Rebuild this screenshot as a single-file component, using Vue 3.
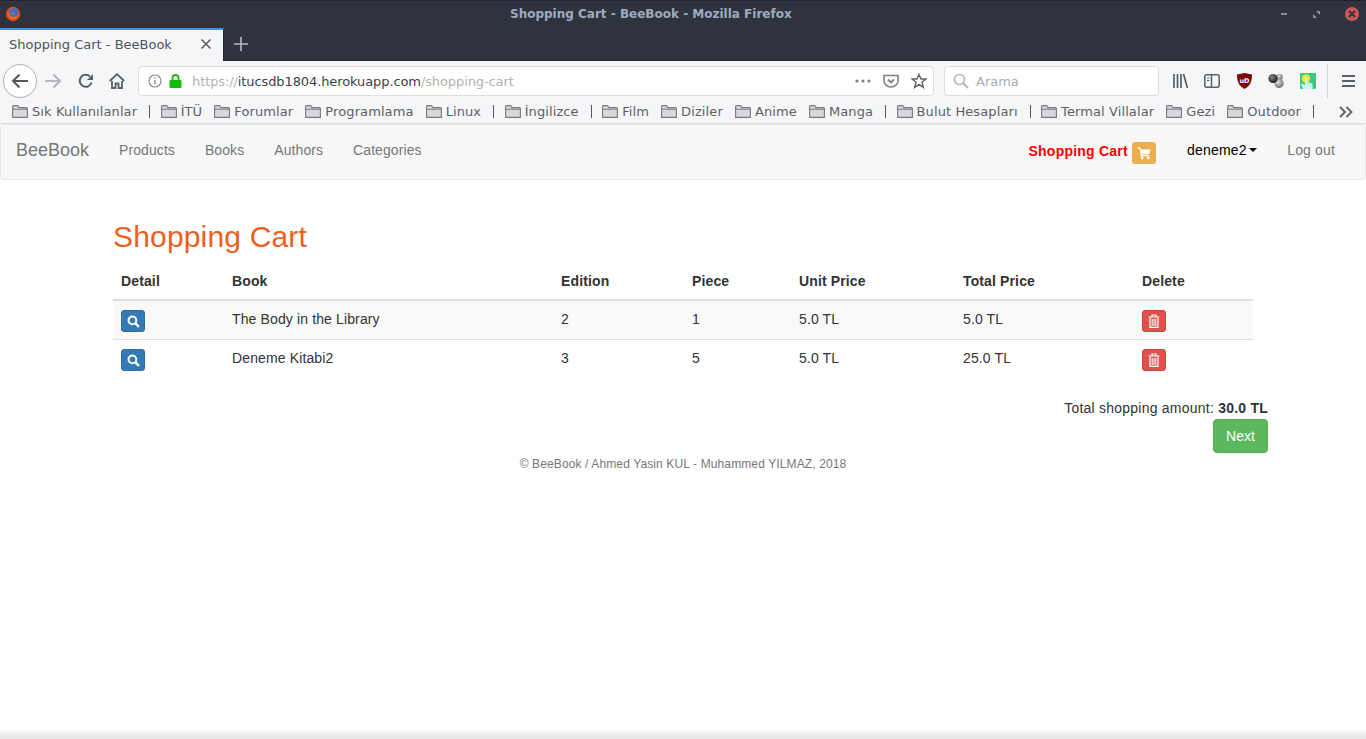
<template>
  <div class="browser">
    <div class="titlebar">
      <svg class="ff-logo" width="16" height="16" viewBox="0 0 16 16">
        <circle cx="8" cy="8" r="7.2" fill="#dc4d1e" />
        <circle cx="8.8" cy="6.6" r="4.4" fill="#2f6fd0" />
        <path d="M3 5C3.5 9 7 12 10.5 10.5C12 10 13 8.5 13 7C13.5 10 11 13 8 13C4.5 13 2.5 9 3 5Z" fill="#e8702a" />
        <path d="M6 7.5C7 9 9 9 10 7.5L8 6.5Z" fill="#e8702a" />
      </svg>
      <span class="window-title">Shopping Cart - BeeBook - Mozilla Firefox</span>
      <div class="window-btns">
        <span class="min"></span>
        <svg class="restore" width="7" height="7" viewBox="0 0 7 7"><path d="M3 0H7V4Z" fill="#8f949c" /><path d="M0 3V7H4Z" fill="#8f949c" /></svg>
        <span class="close">
          <svg width="8" height="8" viewBox="0 0 8 8"><path d="M1 1L7 7M7 1L1 7" stroke="#2f333e" stroke-width="1.8" /></svg>
        </span>
      </div>
    </div>

    <div class="tabbar">
      <div class="tab">
        <span class="tab-title">Shopping Cart - BeeBook</span>
        <svg width="12" height="12" viewBox="0 0 12 12"><path d="M1.5 1.5L10.5 10.5M10.5 1.5L1.5 10.5" stroke="#5b5e66" stroke-width="1.6" /></svg>
      </div>
      <svg class="new-tab" width="14" height="14" viewBox="0 0 14 14"><path d="M7 0V14M0 7H14" stroke="#b9bcc3" stroke-width="1.6" /></svg>
    </div>

    <div class="toolbar">
      <button class="back">
        <svg width="18" height="16" viewBox="0 0 18 16"><path d="M17 8H2M8.5 1.5L2 8L8.5 14.5" fill="none" stroke="#54575f" stroke-width="2" /></svg>
      </button>
      <svg class="forward" width="17" height="16" viewBox="0 0 17 16"><path d="M0 8H15M8.5 1.5L15 8L8.5 14.5" fill="none" stroke="#b5b7bc" stroke-width="2" /></svg>
      <svg class="reload" width="16" height="16" viewBox="0 0 16 16"><path d="M13.5 9.5A6 6 0 1 1 12 3.6" fill="none" stroke="#5b5e66" stroke-width="2" /><path d="M15 1V7H9Z" fill="#5b5e66" /></svg>
      <svg class="home" width="16" height="16" viewBox="0 0 16 16"><path d="M0.8 8L8 1.2L15.2 8" fill="none" stroke="#5b5e66" stroke-width="1.8" /><path d="M3 8V15H6.5V10.5H9.5V15H13V8" fill="none" stroke="#5b5e66" stroke-width="1.8" /></svg>
      <div class="urlbar">
        <svg width="14" height="14" viewBox="0 0 14 14"><circle cx="7" cy="7" r="6" fill="none" stroke="#85878d" stroke-width="1.1" /><path d="M7 6V10.5M7 3.2V4.8" stroke="#85878d" stroke-width="1.3" /></svg>
        <svg class="lock" width="13" height="14" viewBox="0 0 13 14"><path d="M3.5 6V4a3 3 0 0 1 6 0V6" fill="none" stroke="#12bc00" stroke-width="1.8" /><rect x="0.5" y="6" width="12" height="8" rx="1" fill="#12bc00" /></svg>
        <span class="url"><span class="dim">https://</span>itucsdb1804.herokuapp.com<span class="dim">/shopping-cart</span></span>
        <svg class="dots" width="16" height="4" viewBox="0 0 16 4"><circle cx="2" cy="2" r="1.6" fill="#7d7f85" /><circle cx="8" cy="2" r="1.6" fill="#7d7f85" /><circle cx="14" cy="2" r="1.6" fill="#7d7f85" /></svg>
        <svg class="pocket" width="16" height="14" viewBox="0 0 16 14"><path d="M1 1.5H15V6.5A7 6.5 0 0 1 1 6.5Z" fill="none" stroke="#7d7f85" stroke-width="1.6" /><path d="M5 5.5L8 8.5L11 5.5" fill="none" stroke="#7d7f85" stroke-width="1.8" /></svg>
        <svg class="star" width="16" height="16" viewBox="0 0 16 16"><path d="M8 1.5L10 6H14.8L11 9.2L12.3 14.3L8 11.5L3.7 14.3L5 9.2L1.2 6H6Z" fill="none" stroke="#65676d" stroke-width="1.5" /></svg>
      </div>
      <div class="searchbar">
        <svg width="16" height="16" viewBox="0 0 16 16"><circle cx="6.5" cy="6.5" r="5" fill="none" stroke="#b3b5b9" stroke-width="1.6" /><path d="M10.2 10.2L15 15" stroke="#b3b5b9" stroke-width="2" /></svg>
        <span>Arama</span>
      </div>
      <div class="tools">
        <svg width="15" height="14" viewBox="0 0 15 14"><path d="M1 0V14M4.5 0V14M8 0V14M10.5 0L14.5 14" fill="none" stroke="#5b5e66" stroke-width="1.7" /></svg>
        <svg width="16" height="14" viewBox="0 0 16 14"><rect x="0.8" y="0.8" width="14.4" height="12.4" rx="2" fill="none" stroke="#5b5e66" stroke-width="1.5" /><path d="M7.5 1V13" stroke="#5b5e66" stroke-width="1.5" /><path d="M3 4H5.5M3 6.5H5.5" stroke="#5b5e66" stroke-width="1.2" /></svg>
        <svg class="ublock" width="15" height="16" viewBox="0 0 15 16"><path d="M0 1.5L7.5 0L15 1.5C15 9 13 13 7.5 16C2 13 0 9 0 1.5Z" fill="#7b0a0a" /><text x="7.5" y="9.5" text-anchor="middle" font-size="6.5" font-weight="bold" fill="#fff" font-family="DejaVu Sans">uD</text></svg>
        <svg width="16" height="16" viewBox="0 0 16 16">
          <defs>
            <radialGradient id="ball-dark" cx="0.4" cy="0.35" r="0.7"><stop offset="0" stop-color="#8a8a8a" /><stop offset="1" stop-color="#111" /></radialGradient>
            <radialGradient id="ball-light" cx="0.4" cy="0.35" r="0.7"><stop offset="0" stop-color="#e0e0e0" /><stop offset="1" stop-color="#666" /></radialGradient>
          </defs>
          <circle cx="11.5" cy="4" r="3.2" fill="url(#ball-light)" />
          <circle cx="11" cy="10.5" r="4.6" fill="url(#ball-light)" />
          <circle cx="5" cy="5.5" r="4.6" fill="url(#ball-dark)" />
        </svg>
        <svg width="16" height="16" viewBox="0 0 16 16"><rect width="16" height="16" rx="1" fill="#2fce83" /><circle cx="6" cy="5.5" r="4.3" fill="#e6e83a" /><path d="M5 4.5Q6 3 7 4.5V9L11 10L12.5 11V16H3L1 11.5L2 10.5L5 12Z" fill="#cdf3ee" /></svg>
        <i class="tool-sep"></i>
        <svg width="13" height="12" viewBox="0 0 13 12"><path d="M0 1H13M0 6H13M0 11H13" stroke="#5b5e66" stroke-width="1.8" /></svg>
      </div>
    </div>

    <div class="bookmarks">
      <template v-for="b in bookmarks" :key="b.name">
        <span class="bookmark">
          <svg width="16" height="13" viewBox="0 0 16 13"><path d="M0.6 12.4V1.6Q0.6 0.6 1.6 0.6H5.5L7 2.6H14.4Q15.4 2.6 15.4 3.6V12.4Z" fill="#d7d8dc" stroke="#77797f" stroke-width="1.1" /><path d="M1 4.2H15" stroke="#77797f" stroke-width="1" /></svg>
          {{ b.name }}
        </span>
        <i v-if="b.sep" class="bm-sep"></i>
      </template>
      <svg class="more" width="14" height="12" viewBox="0 0 14 12"><path d="M1 1L6 6L1 11M7.5 1L12.5 6L7.5 11" fill="none" stroke="#5b5e66" stroke-width="1.8" /></svg>
    </div>
  </div>

  <nav class="navbar">
    <a class="brand">BeeBook</a>
    <a v-for="link in navLinks" :key="link" class="nav-link">{{ link }}</a>
    <div class="nav-right">
      <a class="cart-link">Shopping Cart</a>
      <span class="cart-badge">
        <svg width="14" height="13" viewBox="0 0 14 13"><path d="M0.5 1H3L4.5 8.5H12" fill="none" stroke="#fff" stroke-width="1.3" /><path d="M3.4 2.5H13.5L12.3 7H4.3Z" fill="#fff" /><circle cx="5.2" cy="11" r="1.4" fill="#fff" /><circle cx="11.2" cy="11" r="1.4" fill="#fff" /></svg>
      </span>
      <a class="user">deneme2<span class="caret"></span></a>
      <a class="logout">Log out</a>
    </div>
  </nav>

  <main class="container">
    <h1 class="page-title">Shopping Cart</h1>
    <table class="cart-table">
      <thead>
        <tr>
          <th class="c-detail">Detail</th>
          <th class="c-book">Book</th>
          <th class="c-edition">Edition</th>
          <th class="c-piece">Piece</th>
          <th class="c-unit">Unit Price</th>
          <th class="c-total">Total Price</th>
          <th>Delete</th>
        </tr>
      </thead>
      <tbody>
        <tr v-for="row in rows" :key="row.book">
          <td>
            <button class="btn-xs blue">
              <svg width="13" height="13" viewBox="0 0 12 12"><circle cx="5" cy="5" r="3.6" fill="none" stroke="#fff" stroke-width="1.8" /><path d="M7.8 7.8L11 11" stroke="#fff" stroke-width="2.2" /></svg>
            </button>
          </td>
          <td>{{ row.book }}</td>
          <td>{{ row.edition }}</td>
          <td>{{ row.piece }}</td>
          <td>{{ row.unit }}</td>
          <td>{{ row.total }}</td>
          <td>
            <button class="btn-xs red">
              <svg width="12" height="14" viewBox="0 0 12 14"><path d="M0.5 3H11.5M4 3V1H8V3" fill="none" stroke="#fff" stroke-width="1.2" /><path d="M2 3.5V13.4H10V3.5" fill="none" stroke="#fff" stroke-width="1.2" /><path d="M4.2 5V12M6 5V12M7.8 5V12" stroke="#fff" stroke-width="1" /></svg>
            </button>
          </td>
        </tr>
      </tbody>
    </table>
    <div class="summary">
      <div class="amount">Total shopping amount: <b>30.0 TL</b></div>
      <button class="next">Next</button>
    </div>
    <footer class="foot">© BeeBook / Ahmed Yasin KUL - Muhammed YILMAZ, 2018</footer>
  </main>

  <div class="bottom-shade"></div>
</template>

<script setup>
const bookmarks = [
  { name: 'Sık Kullanılanlar', sep: true },
  { name: 'İTÜ' },
  { name: 'Forumlar' },
  { name: 'Programlama' },
  { name: 'Linux', sep: true },
  { name: 'İngilizce', sep: true },
  { name: 'Film' },
  { name: 'Diziler' },
  { name: 'Anime' },
  { name: 'Manga', sep: true },
  { name: 'Bulut Hesapları', sep: true },
  { name: 'Termal Villalar' },
  { name: 'Gezi' },
  { name: 'Outdoor', sep: true },
]

const navLinks = ['Products', 'Books', 'Authors', 'Categories']

const rows = [
  { book: 'The Body in the Library', edition: 2, piece: 1, unit: '5.0 TL', total: '5.0 TL' },
  { book: 'Deneme Kitabi2', edition: 3, piece: 5, unit: '5.0 TL', total: '25.0 TL' },
]
</script>

<style>
html, body {
  margin: 0;
  height: 100%;
  overflow: hidden;
  background: #fff;
}
</style>

<style scoped>
svg {
  display: block;
  flex: none;
}

.browser {
  font-family: "DejaVu Sans", sans-serif;
  font-size: 13px;
  color: #5b5e66;
}

.titlebar {
  height: 28px;
  background: #2f333e;
  border-top: 1px solid #22252d;
  box-sizing: border-box;
  display: flex;
  align-items: center;
  position: relative;
}

.ff-logo {
  position: absolute;
  left: 5px;
  top: 5px;
}

.window-title {
  margin: 0 0 1px 510px;
  font-weight: bold;
  font-size: 12px;
  color: #9eacbf;
}

.window-btns {
  position: absolute;
  right: 7px;
  top: 6px;
  display: flex;
  align-items: center;
}

.min {
  width: 6px;
  height: 2px;
  background: #8a8f98;
}

.restore {
  margin: 0 25px 0 26px;
}

.close {
  width: 14px;
  height: 14px;
  border-radius: 50%;
  background: #d2545b;
  display: flex;
  align-items: center;
  justify-content: center;
}

.tabbar {
  height: 33px;
  background: #2f333e;
  display: flex;
  align-items: center;
  border-bottom: 1px solid #22252d;
  box-sizing: border-box;
}

.tab {
  width: 224px;
  height: 33px;
  box-sizing: border-box;
  background: #f5f6f7;
  border-top: 2px solid #4a90d9;
  padding: 0 11px 2px 9px;
  display: flex;
  align-items: center;
  justify-content: space-between;
  border-right: 1px solid #22252d;
}

.tab-title {
  color: #50535b;
}

.new-tab {
  margin-left: 10px;
}

.toolbar {
  height: 39px;
  box-sizing: border-box;
  background: #f5f6f7;
  display: flex;
  align-items: center;
  padding: 1px 0 0 3px;
}

.back {
  width: 34px;
  height: 34px;
  box-sizing: border-box;
  padding: 0;
  border: 1px solid #b0b2b7;
  border-radius: 50%;
  background: #fff;
  display: flex;
  align-items: center;
  justify-content: center;
}

.forward {
  margin-left: 8px;
}

.reload {
  margin-left: 16px;
}

.home {
  margin-left: 15px;
}

.urlbar {
  margin-left: 13px;
  width: 796px;
  height: 30px;
  box-sizing: border-box;
  background: #fff;
  border: 1px solid #dcdee3;
  border-radius: 4px;
  display: flex;
  align-items: center;
  padding: 0 6px 0 9px;
}

.lock {
  margin-left: 7px;
}

.url {
  margin-left: 10px;
  color: #3d3f45;
  flex: 1;
  letter-spacing: -0.1px;
}

.dim {
  color: #b1b2b6;
}

.pocket {
  margin-left: 12px;
}

.star {
  margin-left: 12px;
}

.searchbar {
  margin-left: 10px;
  width: 215px;
  height: 30px;
  box-sizing: border-box;
  background: #fff;
  border: 1px solid #dcdee3;
  border-radius: 4px;
  display: flex;
  align-items: center;
  gap: 7px;
  padding-left: 8px;
  color: #a9abb0;
}

.tools {
  margin-left: 14px;
  display: flex;
  align-items: center;
  gap: 16px;
  height: 34px;
}

.ublock {
  margin-left: 1px;
}

.tool-sep {
  width: 1px;
  height: 34px;
  background: #d3d5d9;
  margin: 0 -2px 0 -5px;
}

.bookmarks {
  height: 24px;
  background: #f5f6f7;
  border-bottom: 1px solid #dcdee3;
  display: flex;
  align-items: center;
  padding-left: 12px;
  gap: 12.1px;
  color: #5e6068;
  white-space: nowrap;
  position: relative;
  box-sizing: border-box;
  letter-spacing: 0.1px;
}

.bookmark {
  display: flex;
  align-items: center;
  gap: 4px;
}

.bm-sep {
  width: 1px;
  height: 13px;
  background: #55575e;
  margin-right: -1.7px;
}

.more {
  position: absolute;
  left: 1339px;
  top: 6px;
}

.navbar {
  height: 56px;
  box-sizing: border-box;
  background: #f8f8f8;
  border: 1px solid #e7e7e7;
  border-radius: 4px;
  display: flex;
  align-items: center;
  padding: 0 30px 4px 15px;
  font-family: "Liberation Sans", sans-serif;
  font-size: 14px;
  color: #777;
}

.brand {
  font-size: 18px;
  margin-right: 30px;
}

.nav-link {
  margin-right: 30px;
  letter-spacing: 0.08px;
}

.nav-right {
  margin-left: auto;
  display: flex;
  align-items: center;
}

.cart-link {
  color: #f00;
  font-weight: bold;
  margin-top: 1px;
  letter-spacing: 0.23px;
}

.cart-badge {
  width: 24px;
  height: 22px;
  margin: 6px 0 0 4px;
  border-radius: 3px;
  background: #f0ad4e;
  display: flex;
  align-items: center;
  justify-content: center;
}

.user {
  color: #000;
  margin-left: 31px;
  display: flex;
  align-items: center;
  letter-spacing: 0.2px;
}

.caret {
  margin-left: 2px;
  border-top: 4px solid #000;
  border-left: 4px solid transparent;
  border-right: 4px solid transparent;
}

.logout {
  margin-left: 30.5px;
  letter-spacing: 0.15px;
}

.container {
  width: 1140px;
  margin-left: 113px;
  font-family: "Liberation Sans", sans-serif;
  font-size: 14px;
  color: #333;
}

.page-title {
  margin: 38px 0 0;
  font-size: 30px;
  font-weight: 400;
  line-height: 38px;
  color: #ec5f1e;
  letter-spacing: 0.17px;
}

.cart-table {
  margin-top: 7px;
  width: 1140px;
  border-collapse: collapse;
  table-layout: fixed;
  letter-spacing: 0.13px;
}

.c-detail { width: 111px; }
.c-book { width: 329px; }
.c-edition { width: 131px; }
.c-piece { width: 107px; }
.c-unit { width: 164px; }
.c-total { width: 179px; }

th {
  box-sizing: border-box;
  text-align: left;
  padding: 8px;
  line-height: 20px;
  border-bottom: 2px solid #ddd;
}

td {
  padding: 8px;
  line-height: 20px;
  vertical-align: top;
  border-top: 1px solid #ddd;
}

tbody tr:first-child td {
  border-top: 0;
  background: #f9f9f9;
}

.btn-xs {
  width: 24px;
  height: 22px;
  padding: 0;
  margin: 1px 0 -1px;
  border-radius: 3px;
  display: flex;
  align-items: center;
  justify-content: center;
  border: 1px solid;
}

.blue {
  background: #337ab7;
  border-color: #2e6da4;
}

.red {
  background: #d9534f;
  border-color: #d43f3a;
}

.summary {
  margin-right: -15px;
  margin-top: 20px;
  display: flex;
  flex-direction: column;
  align-items: flex-end;
  line-height: 20px;
}

.amount {
  letter-spacing: 0.23px;
}

.next {
  width: 55px;
  height: 34px;
  margin-top: 1px;
  font: 14px "Liberation Sans", sans-serif;
  color: #fff;
  background: #5cb85c;
  border: 1px solid #4cae4c;
  border-radius: 4px;
  padding: 0;
}

.foot {
  margin-top: 3px;
  font-size: 12px;
  line-height: 17px;
  color: #777;
  text-align: center;
  letter-spacing: 0.12px;
}

.bottom-shade {
  position: fixed;
  left: 0;
  right: 0;
  bottom: 0;
  height: 11px;
  background: linear-gradient(to bottom, rgba(222, 222, 222, 0), rgba(222, 222, 222, 0.85));
}
</style>
